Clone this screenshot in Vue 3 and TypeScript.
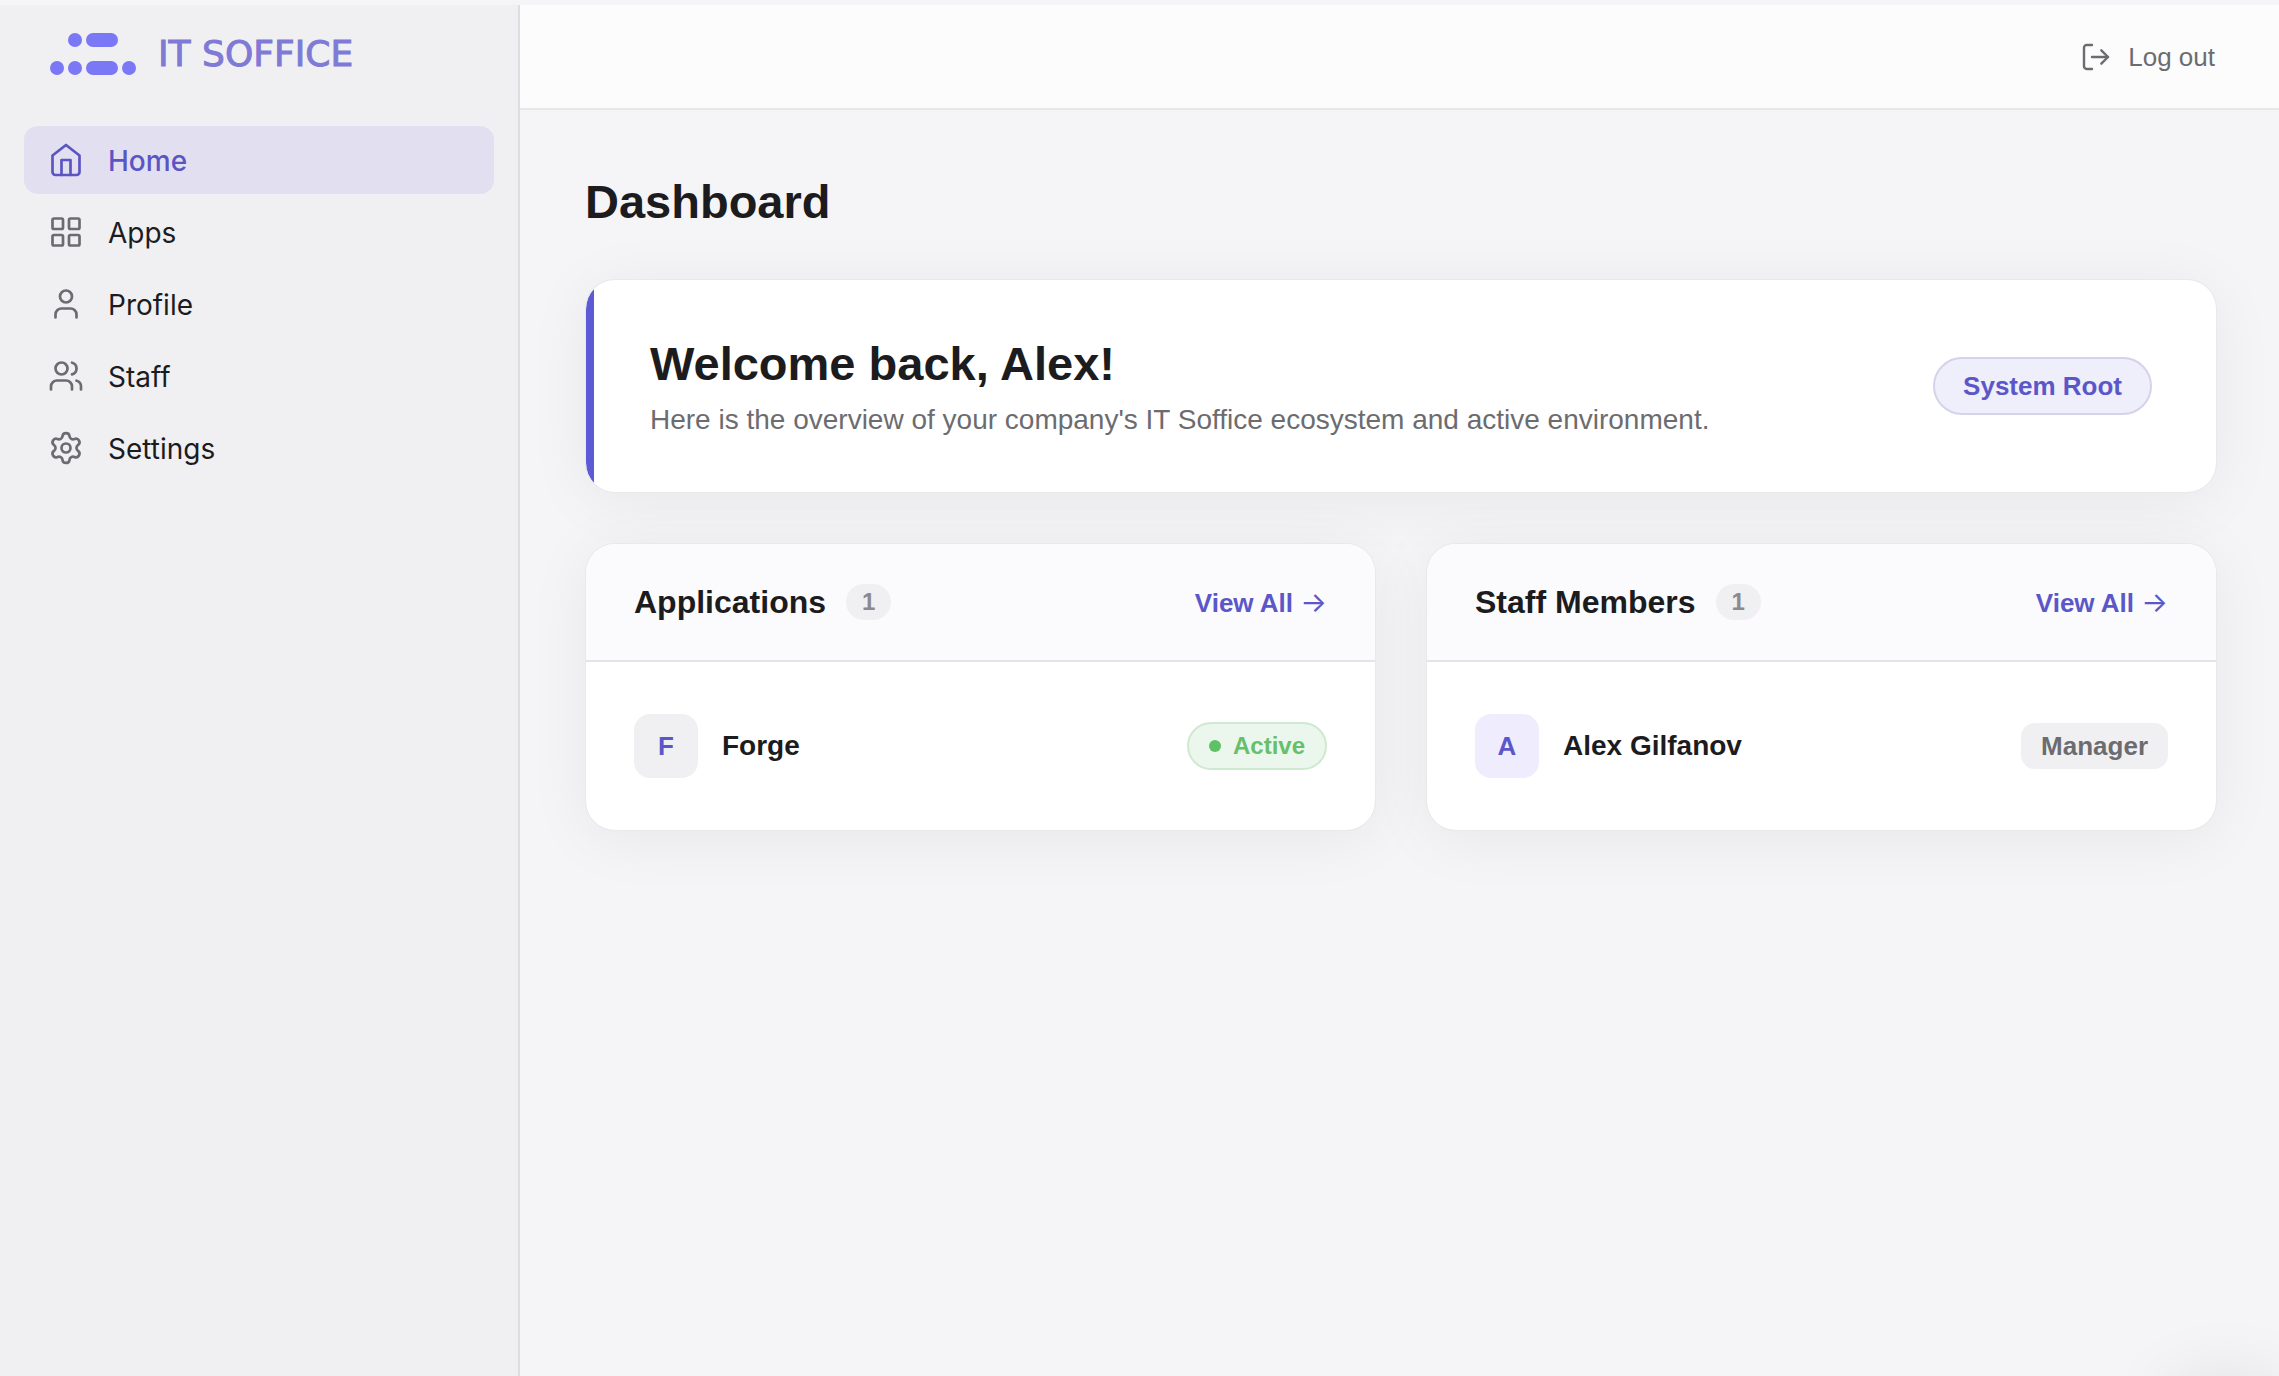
<script setup lang="ts">
interface NavItem {
  label: string
  icon: string[]
  active?: boolean
}

interface Entry {
  name: string
  initial: string
  status: string
  kind: 'app' | 'staff'
}

interface Panel {
  title: string
  entries: Entry[]
}

const navItems: NavItem[] = [
  {
    label: 'Home',
    active: true,
    icon: ['m3 9 9-7 9 7v11a2 2 0 0 1-2 2H5a2 2 0 0 1-2-2z', 'M9 22V12h6v10'],
  },
  {
    label: 'Apps',
    icon: [
      'M4 3h5a1 1 0 0 1 1 1v5a1 1 0 0 1-1 1H4a1 1 0 0 1-1-1V4a1 1 0 0 1 1-1z',
      'M15 3h5a1 1 0 0 1 1 1v5a1 1 0 0 1-1 1h-5a1 1 0 0 1-1-1V4a1 1 0 0 1 1-1z',
      'M15 14h5a1 1 0 0 1 1 1v5a1 1 0 0 1-1 1h-5a1 1 0 0 1-1-1v-5a1 1 0 0 1 1-1z',
      'M4 14h5a1 1 0 0 1 1 1v5a1 1 0 0 1-1 1H4a1 1 0 0 1-1-1v-5a1 1 0 0 1 1-1z',
    ],
  },
  {
    label: 'Profile',
    icon: ['M19 21v-2a4 4 0 0 0-4-4H9a4 4 0 0 0-4 4v2', 'M8 7a4 4 0 1 0 8 0a4 4 0 1 0-8 0'],
  },
  {
    label: 'Staff',
    icon: [
      'M16 21v-2a4 4 0 0 0-4-4H6a4 4 0 0 0-4 4v2',
      'M5 7a4 4 0 1 0 8 0a4 4 0 1 0-8 0',
      'M22 21v-2a4 4 0 0 0-3-3.87',
      'M16 3.13a4 4 0 0 1 0 7.75',
    ],
  },
  {
    label: 'Settings',
    icon: [
      'M9.671 4.136a2.34 2.34 0 0 1 4.659 0 2.34 2.34 0 0 0 3.319 1.915 2.34 2.34 0 0 1 2.33 4.033 2.34 2.34 0 0 0 0 3.831 2.34 2.34 0 0 1-2.33 4.033 2.34 2.34 0 0 0-3.319 1.915 2.34 2.34 0 0 1-4.659 0 2.34 2.34 0 0 0-3.32-1.915 2.34 2.34 0 0 1-2.33-4.033 2.34 2.34 0 0 0 0-3.831A2.34 2.34 0 0 1 6.35 6.051a2.34 2.34 0 0 0 3.319-1.915',
      'M9 12a3 3 0 1 0 6 0a3 3 0 1 0-6 0',
    ],
  },
]

const panels: Panel[] = [
  {
    title: 'Applications',
    entries: [{ name: 'Forge', initial: 'F', status: 'Active', kind: 'app' }],
  },
  {
    title: 'Staff Members',
    entries: [{ name: 'Alex Gilfanov', initial: 'A', status: 'Manager', kind: 'staff' }],
  },
]
</script>

<template>
  <div class="shell">
    <aside class="sidebar">
      <a class="brand" href="#">
        <svg class="brand-mark" viewBox="0 0 86 42" aria-hidden="true">
          <circle cx="25" cy="7" r="7" />
          <rect x="36" y="0" width="32" height="14" rx="7" />
          <circle cx="7" cy="35" r="7" />
          <circle cx="25" cy="35" r="7" />
          <rect x="36" y="28" width="32" height="14" rx="7" />
          <circle cx="79" cy="35" r="7" />
        </svg>
        <span class="brand-name">IT SOFFICE</span>
      </a>
      <nav class="nav">
        <a
          v-for="item in navItems"
          :key="item.label"
          href="#"
          class="nav-item"
          :class="{ active: item.active }"
        >
          <svg class="icon" viewBox="0 0 24 24" aria-hidden="true">
            <path v-for="d in item.icon" :key="d" :d="d" />
          </svg>
          <span class="nav-label">{{ item.label }}</span>
        </a>
      </nav>
    </aside>

    <div class="page">
      <header class="topbar">
        <button class="logout" type="button">
          <svg class="icon icon-small" viewBox="0 0 24 24" aria-hidden="true">
            <path d="M9 21H5a2 2 0 0 1-2-2V5a2 2 0 0 1 2-2h4" />
            <path d="m16 17 5-5-5-5" />
            <path d="M21 12H9" />
          </svg>
          <span>Log out</span>
        </button>
      </header>

      <main class="content">
        <h1 class="title">Dashboard</h1>

        <section class="card welcome">
          <div>
            <h2 class="welcome-title">Welcome back, Alex!</h2>
            <p class="welcome-text">
              Here is the overview of your company's IT Soffice ecosystem and active environment.
            </p>
          </div>
          <span class="role">System Root</span>
        </section>

        <div class="panels">
          <section v-for="panel in panels" :key="panel.title" class="card">
            <div class="panel-head">
              <h3 class="panel-title">{{ panel.title }}</h3>
              <span class="count">{{ panel.entries.length }}</span>
              <a class="view-all" href="#">View All <span class="arrow">→</span></a>
            </div>
            <ul class="entries">
              <li v-for="entry in panel.entries" :key="entry.name" class="entry">
                <span class="avatar" :class="entry.kind">{{ entry.initial }}</span>
                <span class="entry-name">{{ entry.name }}</span>
                <span class="status" :class="entry.kind">{{ entry.status }}</span>
              </li>
            </ul>
          </section>
        </div>
      </main>
    </div>

    <div class="corner-glow" aria-hidden="true"></div>
  </div>
</template>

<style>
body {
  margin: 0;
  background: #f5f5f8;
}
</style>

<style scoped>
.shell {
  box-sizing: border-box;
  display: flex;
  min-height: 100vh;
  padding-top: 5px;
  font-family: "Liberation Sans", Arial, sans-serif;
  color: #1c1c1e;
}

.sidebar {
  box-sizing: border-box;
  flex: 0 0 520px;
  padding: 28px 24px;
  background: #f0f0f3;
  border-right: 2px solid #dededf;
}

.brand {
  display: flex;
  align-items: center;
  gap: 22px;
  height: 42px;
  margin: 0 26px 51px;
  color: #7e7ad6;
  text-decoration: none;
}

.brand-mark {
  width: 86px;
  height: 42px;
  fill: #7b78f5;
}

.brand-name {
  font-family: "DejaVu Sans", sans-serif;
  font-size: 36px;
  line-height: 42px;
  white-space: nowrap;
  -webkit-text-stroke: 1px #7e7ad6;
}

.nav {
  display: flex;
  flex-direction: column;
  gap: 4px;
}

.nav-item {
  display: flex;
  align-items: center;
  gap: 24px;
  height: 68px;
  padding: 0 24px;
  border-radius: 14px;
  font-family: Inter, sans-serif;
  font-size: 28px;
  line-height: 36px;
  color: #1c1c1e;
  text-decoration: none;
}

.nav-item.active {
  background: #e2e0f0;
  color: #5b55c4;
  font-weight: 500;
}

.nav-label {
  padding-top: 2px;
}

.icon {
  flex: none;
  width: 36px;
  height: 36px;
  fill: none;
  stroke: #6c6c70;
  stroke-width: 1.8;
  stroke-linecap: round;
  stroke-linejoin: round;
}

.active .icon {
  stroke: #5b55c4;
}

.icon-small {
  width: 32px;
  height: 32px;
}

.page {
  flex: 1;
  min-width: 0;
}

.topbar {
  display: flex;
  align-items: center;
  justify-content: flex-end;
  height: 103px;
  padding: 0 64px;
  background: #fcfcfd;
  border-bottom: 2px solid #e8e8ea;
}

.logout {
  display: flex;
  align-items: center;
  gap: 16px;
  padding: 0;
  border: 0;
  background: none;
  font: inherit;
  font-size: 26px;
  line-height: 32px;
  color: #6c6c70;
  cursor: pointer;
}

.content {
  padding: 64px 62px 64px 65px;
}

.title {
  margin: 0 0 50px;
  font-size: 47px;
  line-height: 55px;
}

.card {
  overflow: hidden;
  background: #fff;
  background-clip: padding-box;
  border: 1px solid #e9e9ec;
  border-radius: 30px;
  box-shadow: 0 8px 64px rgba(0, 0, 0, 0.06);
}

.welcome {
  display: flex;
  align-items: center;
  justify-content: space-between;
  gap: 48px;
  margin-bottom: 50px;
  padding: 54px 64px;
  background-image: linear-gradient(to right, #5d5ad6 8px, #fff 8px);
}

.welcome-title {
  margin: 0 0 8px;
  font-size: 47px;
  line-height: 60px;
}

.welcome-text {
  margin: 0;
  font-size: 28px;
  line-height: 36px;
  color: #6c6c70;
}

.role {
  padding: 11px 28px;
  border: 2px solid #d5d2ea;
  border-radius: 29px;
  background: #efeefb;
  font-size: 26px;
  font-weight: 700;
  line-height: 32px;
  color: #5b57c9;
  white-space: nowrap;
}

.panels {
  display: grid;
  grid-template-columns: 1fr 1fr;
  gap: 50px;
}

.panel-head {
  display: flex;
  align-items: center;
  gap: 20px;
  height: 116px;
  padding: 0 48px;
  background: #fbfbfd;
  border-bottom: 2px solid #e4e4e7;
}

.panel-title {
  margin: 0;
  font-size: 32px;
  line-height: 36px;
}

.count {
  padding: 0 16px;
  border-radius: 18px;
  background: #f0f0f2;
  font-size: 24px;
  font-weight: 700;
  line-height: 36px;
  color: #8a8a8e;
}

.view-all {
  margin-left: auto;
  font-size: 26px;
  font-weight: 700;
  line-height: 32px;
  color: #5b57c9;
  text-decoration: none;
  white-space: nowrap;
}

.arrow {
  font-family: Inter, sans-serif;
  font-size: 28px;
  font-weight: 400;
}

.entries {
  margin: 0;
  padding: 52px 48px;
  list-style: none;
}

.entry {
  display: flex;
  align-items: center;
  gap: 24px;
}

.avatar {
  width: 64px;
  border-radius: 16px;
  font-size: 26px;
  font-weight: 700;
  line-height: 64px;
  text-align: center;
  color: #5b57c9;
}

.avatar.app {
  background: #f0f0f3;
}

.avatar.staff {
  background: #efedfd;
}

.entry-name {
  font-size: 28px;
  font-weight: 700;
  line-height: 36px;
}

.status {
  display: flex;
  align-items: center;
  gap: 12px;
  margin-left: auto;
  padding: 0 20px;
  font-weight: 700;
}

.status.app {
  border: 2px solid #cfe9d1;
  border-radius: 24px;
  background: #ebf7ec;
  font-size: 24px;
  line-height: 44px;
  color: #66bf6b;
}

.status.app::before {
  content: "";
  width: 12px;
  height: 12px;
  border-radius: 50%;
  background: #5fc165;
}

.status.staff {
  border-radius: 14px;
  background: #f0f0f2;
  font-size: 26px;
  line-height: 46px;
  color: #6c6c70;
}

/* Shadow of the widget docked just below the lower right corner */
.corner-glow {
  position: fixed;
  right: 0;
  bottom: -60px;
  width: 110px;
  height: 50px;
  border-radius: 24px 0 0 24px;
  box-shadow: 0 0 72px rgba(0, 0, 0, 0.12);
}
</style>
